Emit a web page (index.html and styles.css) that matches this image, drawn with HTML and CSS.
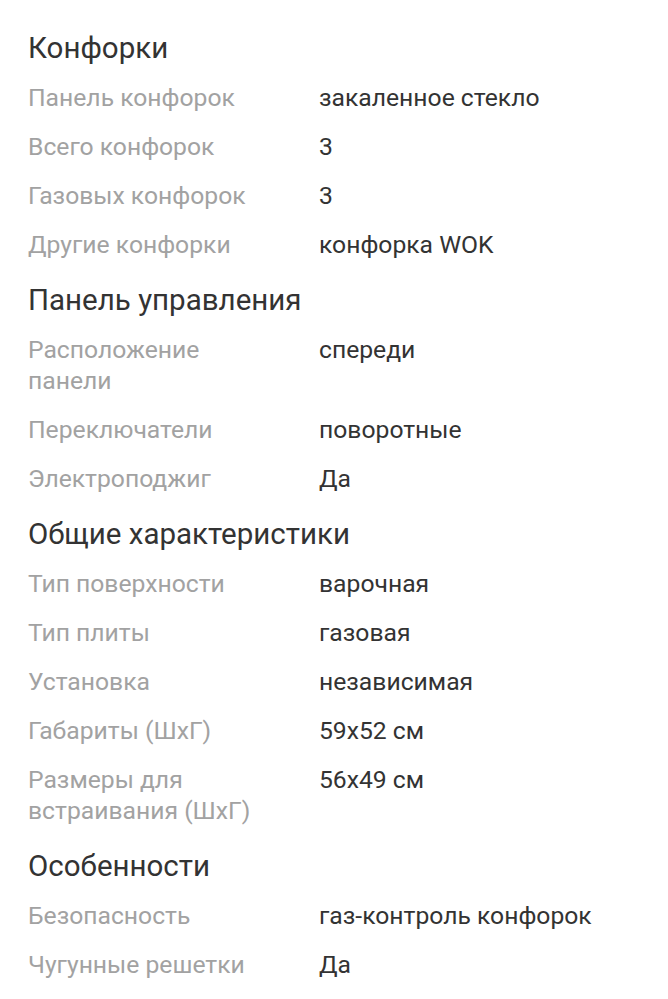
FILE: index.html
```html
<!DOCTYPE html>
<html lang="ru">
<head>
<meta charset="utf-8">
<link rel="stylesheet" href="styles.css">
</head>
<body>
<div class="specs">
  <section class="group">
    <h2 class="group-title">Конфорки</h2>
    <div class="row"><div class="label">Панель конфорок</div><div class="value">закаленное стекло</div></div>
    <div class="row"><div class="label">Всего конфорок</div><div class="value">3</div></div>
    <div class="row"><div class="label">Газовых конфорок</div><div class="value">3</div></div>
    <div class="row"><div class="label">Другие конфорки</div><div class="value">конфорка WOK</div></div>
  </section>
  <section class="group">
    <h2 class="group-title">Панель управления</h2>
    <div class="row"><div class="label">Расположение панели</div><div class="value">спереди</div></div>
    <div class="row"><div class="label">Переключатели</div><div class="value">поворотные</div></div>
    <div class="row"><div class="label">Электроподжиг</div><div class="value">Да</div></div>
  </section>
  <section class="group">
    <h2 class="group-title">Общие характеристики</h2>
    <div class="row"><div class="label">Тип поверхности</div><div class="value">варочная</div></div>
    <div class="row"><div class="label">Тип плиты</div><div class="value">газовая</div></div>
    <div class="row"><div class="label">Установка</div><div class="value">независимая</div></div>
    <div class="row"><div class="label">Габариты (ШхГ)</div><div class="value">59x52 см</div></div>
    <div class="row"><div class="label">Размеры для встраивания (ШхГ)</div><div class="value">56x49 см</div></div>
  </section>
  <section class="group">
    <h2 class="group-title">Особенности</h2>
    <div class="row"><div class="label">Безопасность</div><div class="value">газ-контроль конфорок</div></div>
    <div class="row"><div class="label">Чугунные решетки</div><div class="value">Да</div></div>
  </section>
</div>
</body>
</html>
```
FILE: styles.css
```css
html, body {
  margin: 0;
  padding: 0;
  background: #ffffff;
}
body {
  font-family: Roboto, "Noto Sans", sans-serif;
  width: 668px;
  overflow: hidden;
}
.specs {
  padding: 30px 0 0 28px;
}
.group {
  margin-bottom: 22px;
}
.group-title {
  margin: 0 0 16px 0;
  font-size: 29.5px;
  line-height: 36px;
  font-weight: 400;
  color: #333333;
}
.row {
  display: grid;
  grid-template-columns: 291px 1fr;
  margin-bottom: 18px;
  font-size: 24.7px;
  line-height: 31px;
}
.row:last-child {
  margin-bottom: 0;
}
.label {
  color: #a2a2a2;
  padding-right: 36px;
}
.value {
  color: #333333;
}
```
